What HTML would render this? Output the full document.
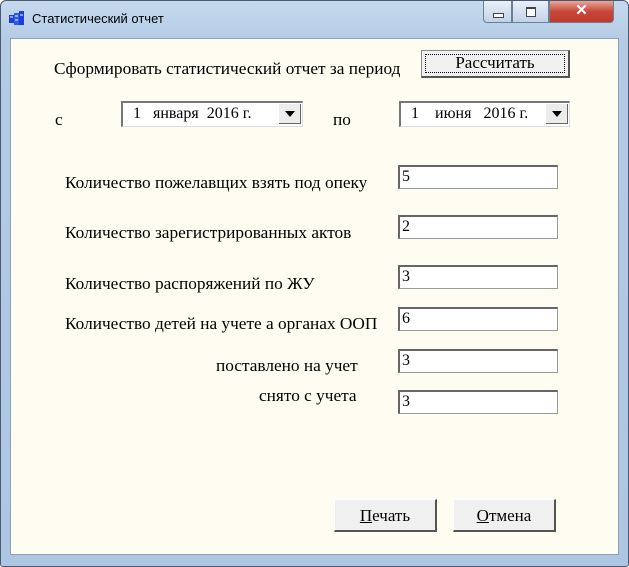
<html><head><style>
body{margin:0;width:629px;height:567px;overflow:hidden;font-family:"Liberation Serif","Times New Roman","DejaVu Serif",serif;font-size:15px;}
.win{position:absolute;left:0;top:0;width:627px;height:565px;border:1px solid #4a5a70;border-radius:6px 6px 3px 3px;background:linear-gradient(#c6daef,#b4cbe4 40px,#adc6e2);}
.client{position:absolute;left:9px;top:37px;width:607px;height:515px;background:#fffcf1;border:1px solid #8aa0bb;font-family:"Liberation Serif","Times New Roman","DejaVu Serif",serif;}
.t{position:absolute;color:#000;white-space:nowrap;font-size:17.3px;}
.in{position:absolute;left:387px;width:160px;height:24px;background:#fff;border:1px solid #999;border-top:2px solid #666;border-left:2px solid #666;box-sizing:border-box;font-size:16px;padding:1px 0 0 2px;font-family:inherit;}
.dp{position:absolute;height:26px;background:#fff;border-top:2px solid #777;border-left:2px solid #777;border-right:1px solid #ddd;border-bottom:1px solid #ddd;box-sizing:border-box;font-size:16px;padding:2px 0 0 10px;white-space:nowrap;}
.dd{position:absolute;right:1px;top:1px;width:22px;height:20px;background:#ececec;border-right:1px solid #666;border-bottom:1px solid #666;box-sizing:border-box;}
.dd:after{content:"";position:absolute;left:6px;top:7px;border-left:5px solid transparent;border-right:5px solid transparent;border-top:6px solid #000;}
.btn{position:absolute;background:#f0f0f0;border:1px solid #fff;border-right:2px solid #555;border-bottom:2px solid #555;box-sizing:border-box;text-align:center;font-size:17px;}
.cb{position:absolute;top:0;height:22px;border:1px solid #6d7f97;border-top:none;box-sizing:border-box;}
</style></head><body>
<div class="win">
<svg style="position:absolute;left:8px;top:10px" width="16" height="16"><rect x="0" y="4" width="5" height="8" fill="#1c3fd0"/><rect x="5" y="2" width="5" height="12" fill="#2a5af0"/><rect x="10" y="0" width="5" height="14" fill="#1c3fd0"/><path d="M1 6h3M6 5h3M11 4h3M6 9h3" stroke="#fff"/></svg>
<div style="position:absolute;left:31px;top:10px;font-family:'Liberation Sans',sans-serif;font-size:13px;">Статистический отчет</div>
<div class="cb" style="left:482px;width:29px;border-radius:0 0 0 4px;background:linear-gradient(#e9f0f8,#c2d3e8);"><div style="position:absolute;left:9px;top:12px;width:9px;height:3px;border:1px solid #444;background:#fff"></div></div>
<div class="cb" style="left:511px;width:37px;background:linear-gradient(#e9f0f8,#c2d3e8);"><div style="position:absolute;left:13px;top:6px;width:8px;height:7px;border:1px solid #444;border-top-width:2px;background:#fff"></div></div>
<div class="cb" style="left:548px;width:65px;border-radius:0 0 4px 0;background:linear-gradient(#e8a89a,#c9473a 50%,#c0392b);color:#fff;text-align:center;font:bold 15px 'Liberation Sans',sans-serif;line-height:20px;">✕</div>
<div class="client">
<div class="t" style="left:43px;top:20px">Сформировать статистический отчет за период</div>
<div class="btn" style="left:410px;top:11px;width:149px;height:28px;border:1px solid #888;border-right:2px solid #555;border-bottom:2px solid #555;padding-top:2px;"><div style="position:absolute;left:3px;top:3px;right:3px;bottom:3px;border:1px dotted #000"></div>Рассчитать</div>
<div class="t" style="left:44px;top:71px">с</div>
<div class="dp" style="left:110px;top:62px;width:182px;">1&nbsp;&nbsp; января&nbsp; 2016 г.<div class="dd"></div></div>
<div class="t" style="left:322px;top:71px">по</div>
<div class="dp" style="left:388px;top:62px;width:171px;">1&nbsp;&nbsp;&nbsp; июня&nbsp;&nbsp; 2016 г.<div class="dd"></div></div>
<div class="t" style="left:54px;top:134px">Количество пожелавщих взять под опеку</div>
<div class="in" style="top:126px">5</div>
<div class="t" style="left:54px;top:184px">Количество зарегистрированных актов</div>
<div class="in" style="top:176px">2</div>
<div class="t" style="left:54px;top:235px">Количество распоряжений по ЖУ</div>
<div class="in" style="top:226px">3</div>
<div class="t" style="left:54px;top:275px">Количество детей на учете а органах ООП</div>
<div class="in" style="top:268px">6</div>
<div class="t" style="left:205px;top:317px">поставлено на учет</div>
<div class="in" style="top:310px">3</div>
<div class="t" style="left:248px;top:347px">снято с учета</div>
<div class="in" style="top:351px">3</div>
<div class="btn" style="left:323px;top:460px;width:103px;height:33px;padding-top:6px;"><u>П</u>ечать</div>
<div class="btn" style="left:442px;top:460px;width:103px;height:33px;padding-top:6px;"><u>О</u>тмена</div>
</div>
</div>
</body></html>
